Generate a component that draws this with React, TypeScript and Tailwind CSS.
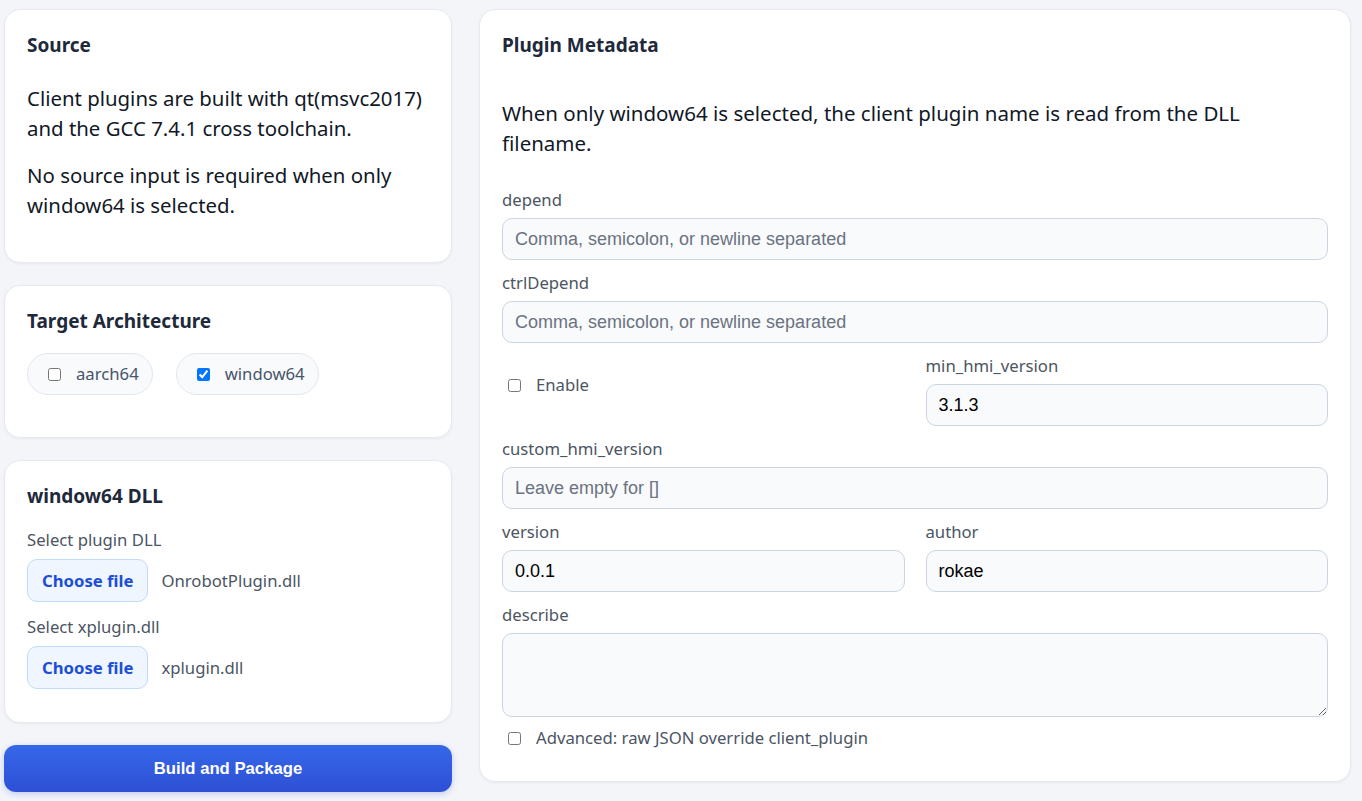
import React from "react";

const BODY_FONT = "font-['Noto_Sans',sans-serif]";

const card =
  "rounded-[16px] border border-[#e6eaf0] bg-white shadow-[0_1px_3px_rgba(15,23,42,0.05)]";

const title = "text-[19px] font-bold leading-[27px] text-[#1e293b]";

const inputCls =
  "block w-full h-[42px] rounded-[10px] border border-[#cbd5e1] bg-[#f8fafc] px-[12px] font-['Liberation_Sans',Arial,sans-serif] text-[18px] text-black placeholder:text-[#6b7280] outline-none";

function Field({
  label,
  value,
  placeholder,
  className = "",
}: {
  label: string;
  value?: string;
  placeholder?: string;
  className?: string;
}) {
  return (
    <div className={className}>
      <div className="text-[16.7px] leading-[24px] text-[#4b5563]">{label}</div>
      <input
        className={`${inputCls} mt-[6px]`}
        defaultValue={value}
        placeholder={placeholder}
      />
    </div>
  );
}

function Chip({ label, checked }: { label: string; checked?: boolean }) {
  return (
    <label className="flex h-[42px] items-center gap-[15px] rounded-full border border-[#e2e8f0] bg-[#f8fafc] pl-[20px] pr-[13px] text-[16.7px] text-[#475569]">
      <input type="checkbox" defaultChecked={checked} className="h-[13px] w-[13px]" />
      {label}
    </label>
  );
}

function FilePick({ name }: { name: string }) {
  return (
    <div className="mt-[7px] flex items-center gap-[13px]">
      <button className="h-[43px] rounded-[10px] border border-[#bfdbfe] bg-[#eff6ff] px-[14px] text-[16.7px] font-bold text-[#1d4ed8]">
        Choose file
      </button>
      <span className="text-[16.7px] text-[#4b5563]">{name}</span>
    </div>
  );
}

export default function App() {
  return (
    <div
      className={`min-h-screen bg-[#f3f5f9] pl-[4px] pt-[9px] ${BODY_FONT} text-[#111827]`}
    >
      <div className="flex items-start gap-[27px]">
        {/* Left column */}
        <div className="flex w-[448px] flex-col">
          <section className={`${card} px-[22px] pt-[22px] pb-[42px]`}>
            <h2 className={title}>Source</h2>
            <p className="mt-[24px] text-[20.4px] leading-[30px]">
              Client plugins are built with qt(msvc2017) and the GCC 7.4.1 cross toolchain.
            </p>
            <p className="mt-[17px] text-[20.4px] leading-[30px]">
              No source input is required when only window64 is selected.
            </p>
          </section>

          <section className={`${card} mt-[22px] px-[22px] pt-[22px] pb-[42px]`}>
            <h2 className={title}>Target Architecture</h2>
            <div className="mt-[18px] flex gap-[23px]">
              <Chip label="aarch64" />
              <Chip label="window64" checked />
            </div>
          </section>

          <section className={`${card} mt-[22px] px-[22px] pt-[22px] pb-[33px]`}>
            <h2 className={title}>window64 DLL</h2>
            <div className="mt-[18px] text-[16.7px] leading-[24px] text-[#4b5563]">
              Select plugin DLL
            </div>
            <FilePick name="OnrobotPlugin.dll" />
            <div className="mt-[13px] text-[16.7px] leading-[24px] text-[#4b5563]">
              Select xplugin.dll
            </div>
            <FilePick name="xplugin.dll" />
          </section>

          <button className="mt-[22px] h-[47px] w-full rounded-[12px] bg-gradient-to-b from-[#3667e9] to-[#2e50d5] font-['Liberation_Sans',Arial,sans-serif] text-[16.7px] font-bold text-white shadow-[0_2px_6px_rgba(47,82,214,0.25)]">
            Build and Package
          </button>
        </div>

        {/* Right column */}
        <section className={`${card} w-[872px] px-[22px] pt-[22px] pb-[31px]`}>
          <h2 className={title}>Plugin Metadata</h2>
          <p className="mt-[39px] max-w-[790px] text-[20.5px] leading-[30px]">
            When only window64 is selected, the client plugin name is read from the DLL filename.
          </p>

          <Field
            className="mt-[30px]"
            label="depend"
            placeholder="Comma, semicolon, or newline separated"
          />
          <Field
            className="mt-[11px]"
            label="ctrlDepend"
            placeholder="Comma, semicolon, or newline separated"
          />

          <div className="mt-[11px] grid grid-cols-2 gap-x-[21px]">
            <label className="mt-[19px] flex h-[24px] items-center gap-[15px] pl-[6px] text-[16.7px] text-[#4b5563]">
              <input type="checkbox" className="h-[13px] w-[13px]" />
              Enable
            </label>
            <Field label="min_hmi_version" value="3.1.3" />
          </div>

          <Field
            className="mt-[11px]"
            label="custom_hmi_version"
            placeholder="Leave empty for []"
          />

          <div className="mt-[11px] grid grid-cols-2 gap-x-[21px]">
            <Field label="version" value="0.0.1" />
            <Field label="author" value="rokae" />
          </div>

          <div className="mt-[11px]">
            <div className="text-[16.7px] leading-[24px] text-[#4b5563]">describe</div>
            <textarea className="mt-[6px] block h-[84px] w-full rounded-[10px] border border-[#cbd5e1] bg-[#f8fafc] px-[12px] py-[10px] font-['Liberation_Sans',Arial,sans-serif] text-[18px] outline-none" />
          </div>

          <label className="mt-[9px] flex h-[24px] items-center gap-[15px] pl-[6px] text-[16.7px] text-[#4b5563]">
            <input type="checkbox" className="h-[13px] w-[13px]" />
            Advanced: raw JSON override client_plugin
          </label>
        </section>
      </div>
    </div>
  );
}
